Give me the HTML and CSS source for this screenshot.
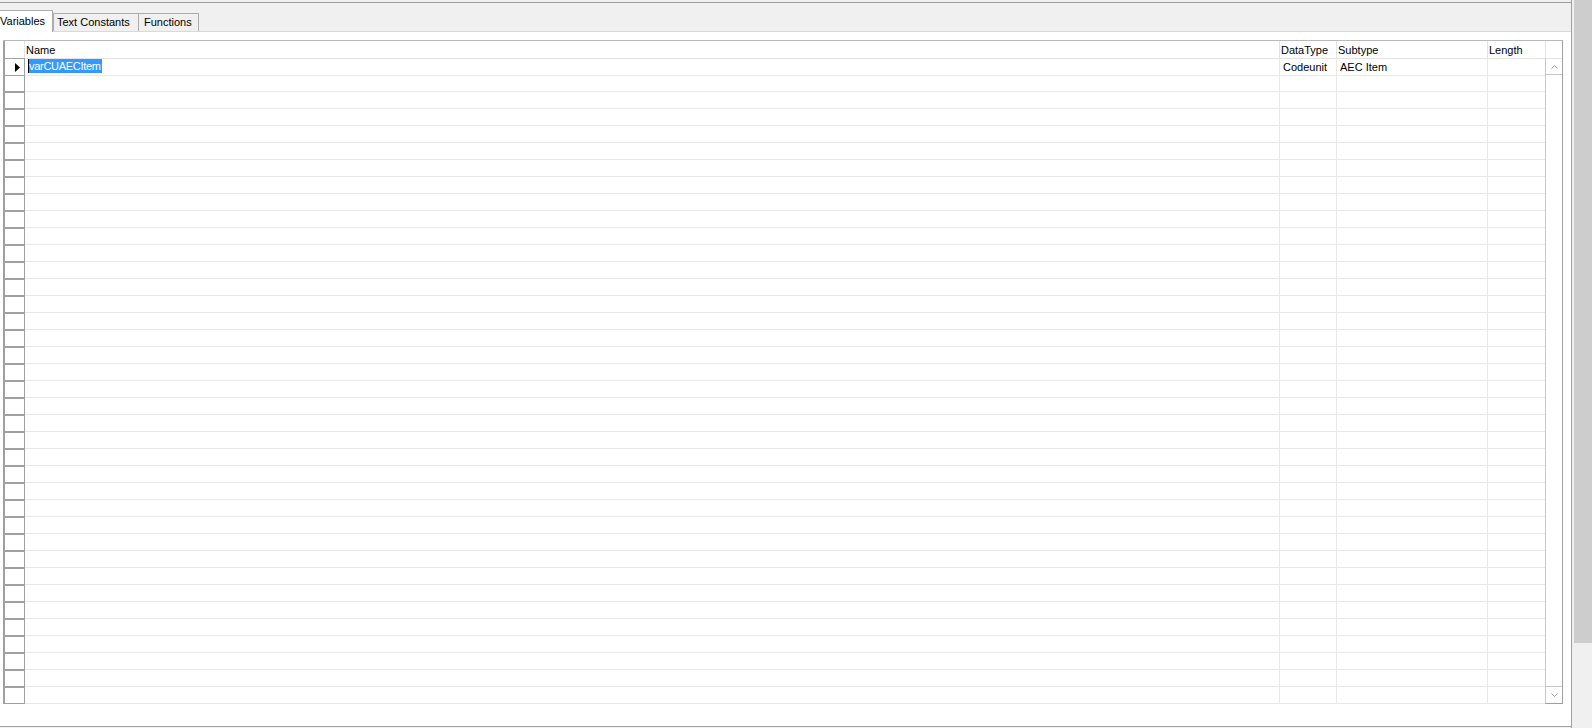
FILE: index.html
```html
<!DOCTYPE html>
<html lang="en">
  <head>
    <meta charset="UTF-8" />
    <title>C/AL Globals</title>
    <link rel="stylesheet" href="styles.css">
  </head>
  <body>
    <div class="window">
      <div class="editor">
        <div class="topline"></div>
        <div class="tabs">
          <div class="tab tab_active tab_vars">Variables</div>
          <div class="tab tab_text">Text Constants</div>
          <div class="tab tab_funcs">Functions</div>
        </div>
        <div class="panel">
          <div class="grid">
            <div class="head">
              <div class="ind"></div>
              <div>Name</div>
              <div>DataType</div>
              <div>Subtype</div>
              <div>Length</div>
              <div class="corner"></div>
            </div>
            <div class="body">
              <div class="rows">
                <div class="row">
                  <div class="ind ind_current">
                    <svg width="5" height="9" viewBox="0 0 5 9"><path d="M0 0 L5 4.5 L0 9 Z" fill="#000" /></svg>
                  </div>
                  <div class="name"><span class="selected">varCUAECItem</span></div>
                  <div class="dtype">Codeunit</div>
                  <div class="stype">AEC Item</div>
                  <div class="len"></div>
                </div>
                <div class="row"><div class="ind"></div><div></div><div></div><div></div><div class="len"></div></div>
                <div class="row"><div class="ind"></div><div></div><div></div><div></div><div class="len"></div></div>
                <div class="row"><div class="ind"></div><div></div><div></div><div></div><div class="len"></div></div>
                <div class="row"><div class="ind"></div><div></div><div></div><div></div><div class="len"></div></div>
                <div class="row"><div class="ind"></div><div></div><div></div><div></div><div class="len"></div></div>
                <div class="row"><div class="ind"></div><div></div><div></div><div></div><div class="len"></div></div>
                <div class="row"><div class="ind"></div><div></div><div></div><div></div><div class="len"></div></div>
                <div class="row"><div class="ind"></div><div></div><div></div><div></div><div class="len"></div></div>
                <div class="row"><div class="ind"></div><div></div><div></div><div></div><div class="len"></div></div>
                <div class="row"><div class="ind"></div><div></div><div></div><div></div><div class="len"></div></div>
                <div class="row"><div class="ind"></div><div></div><div></div><div></div><div class="len"></div></div>
                <div class="row"><div class="ind"></div><div></div><div></div><div></div><div class="len"></div></div>
                <div class="row"><div class="ind"></div><div></div><div></div><div></div><div class="len"></div></div>
                <div class="row"><div class="ind"></div><div></div><div></div><div></div><div class="len"></div></div>
                <div class="row"><div class="ind"></div><div></div><div></div><div></div><div class="len"></div></div>
                <div class="row"><div class="ind"></div><div></div><div></div><div></div><div class="len"></div></div>
                <div class="row"><div class="ind"></div><div></div><div></div><div></div><div class="len"></div></div>
                <div class="row"><div class="ind"></div><div></div><div></div><div></div><div class="len"></div></div>
                <div class="row"><div class="ind"></div><div></div><div></div><div></div><div class="len"></div></div>
                <div class="row"><div class="ind"></div><div></div><div></div><div></div><div class="len"></div></div>
                <div class="row"><div class="ind"></div><div></div><div></div><div></div><div class="len"></div></div>
                <div class="row"><div class="ind"></div><div></div><div></div><div></div><div class="len"></div></div>
                <div class="row"><div class="ind"></div><div></div><div></div><div></div><div class="len"></div></div>
                <div class="row"><div class="ind"></div><div></div><div></div><div></div><div class="len"></div></div>
                <div class="row"><div class="ind"></div><div></div><div></div><div></div><div class="len"></div></div>
                <div class="row"><div class="ind"></div><div></div><div></div><div></div><div class="len"></div></div>
                <div class="row"><div class="ind"></div><div></div><div></div><div></div><div class="len"></div></div>
                <div class="row"><div class="ind"></div><div></div><div></div><div></div><div class="len"></div></div>
                <div class="row"><div class="ind"></div><div></div><div></div><div></div><div class="len"></div></div>
                <div class="row"><div class="ind"></div><div></div><div></div><div></div><div class="len"></div></div>
                <div class="row"><div class="ind"></div><div></div><div></div><div></div><div class="len"></div></div>
                <div class="row"><div class="ind"></div><div></div><div></div><div></div><div class="len"></div></div>
                <div class="row"><div class="ind"></div><div></div><div></div><div></div><div class="len"></div></div>
                <div class="row"><div class="ind"></div><div></div><div></div><div></div><div class="len"></div></div>
                <div class="row"><div class="ind"></div><div></div><div></div><div></div><div class="len"></div></div>
                <div class="row"><div class="ind"></div><div></div><div></div><div></div><div class="len"></div></div>
                <div class="row"><div class="ind"></div><div></div><div></div><div></div><div class="len"></div></div>
              </div>
              <div class="vscroll">
                <div class="sbtn sbtn_up">
                  <svg width="7" height="5" viewBox="0 0 7 5"><polyline points="0.5,4.5 3.5,1.5 6.5,4.5" fill="none" stroke="#9a9a9a" /></svg>
                </div>
                <div class="sbtn sbtn_down">
                  <svg width="7" height="5" viewBox="0 0 7 5"><polyline points="0.5,0.5 3.5,3.5 6.5,0.5" fill="none" stroke="#9a9a9a" /></svg>
                </div>
              </div>
            </div>
          </div>
        </div>
      </div>
      <div class="outer_scroll">
        <div class="thumb"></div>
      </div>
    </div>
  </body>
</html>
```

FILE: styles.css
```css
body {
  margin: 0;
  background: #f0f0f0;
  font-family: "Liberation Sans", Arial, sans-serif;
  font-size: 11px;
  color: #000000;
  overflow: hidden;
}
.window {
  display: flex;
  height: 728px;
}
.editor {
  width: 1572px;
  box-sizing: border-box;
  border-right: 1px solid #a0a0a0;
  display: flex;
  flex-direction: column;
  overflow: hidden;
}
.topline {
  height: 2px;
  border-bottom: 1px solid #a0a0a0;
}
.tabs {
  height: 28px;
  display: flex;
  align-items: flex-end;
  margin-left: -4px;
}
.tab {
  box-sizing: border-box;
  height: 18px;
  border: 1px solid #acacac;
  border-bottom: none;
  line-height: 17px;
  white-space: nowrap;
}
.tab_active {
  height: 22px;
  line-height: 21px;
  background: #ffffff;
  margin-bottom: -1px;
  position: relative;
}
.tab_vars {
  width: 57px;
  padding-left: 3px;
}
.tab_text {
  width: 86px;
  padding-left: 3px;
}
.tab_funcs {
  width: 60px;
  padding-left: 5px;
  border-left: none;
}
.panel {
  flex: 1;
  background: #ffffff;
  border-top: 1px solid #d9d9d9;
  border-bottom: 1px solid #a0a0a0;
  margin-bottom: 1px;
}
.grid {
  margin: 8px 0 0 3px;
  width: 1560px;
  box-sizing: border-box;
  border-top: 1px solid #b9b9b9;
  border-right: 1px solid #a0a0a0;
}
.head {
  display: grid;
  grid-template-columns: 22px 1255px 57px 151px 58px 16px;
  height: 17px;
}
.head > div {
  box-sizing: border-box;
  border-right: 1px solid #e3e3e3;
  border-bottom: 1px solid #e3e3e3;
  line-height: 16px;
  padding-top: 1px;
  padding-left: 1px;
  white-space: nowrap;
}
.head .ind {
  border-left: 2px solid #a0a0a0;
  border-bottom-color: #a0a0a0;
}
.head .corner {
  border-right: none;
}
.body {
  display: flex;
}
.rows {
  width: 1542px;
}
.row {
  display: grid;
  grid-template-columns: 22px 1255px 57px 151px 57px;
  height: 17px;
}
.row > div {
  box-sizing: border-box;
  border-right: 1px solid #e8e8e8;
  border-bottom: 1px solid #e8e8e8;
  line-height: 16px;
  padding-top: 1px;
  white-space: nowrap;
}
.row .len {
  border-right: none;
}
.row .ind {
  border: 1px solid #a0a0a0;
  border-left-width: 2px;
  padding-top: 0;
}
.ind_current {
  display: flex;
  align-items: center;
  padding-left: 10px;
}
.name {
  padding-left: 3px;
}
.row .name {
  padding-top: 1px;
}
.selected {
  display: inline-block;
  height: 14px;
  line-height: 15px;
  vertical-align: top;
  padding-right: 1px;
  letter-spacing: -0.3px;
  background: #3399ff;
  color: #ffffff;
  border-left: 1px solid #000000;
}
.dtype {
  padding-left: 3px;
}
.stype {
  padding-left: 3px;
}
.vscroll {
  width: 17px;
  box-sizing: border-box;
  border-left: 1px solid #c8c8c8;
  border-bottom: 1px solid #a0a0a0;
  display: flex;
  flex-direction: column;
  justify-content: space-between;
}
.sbtn {
  height: 17px;
  box-sizing: border-box;
  display: flex;
  align-items: center;
  justify-content: center;
}
.sbtn_up {
  border-bottom: 1px solid #c8c8c8;
}
.sbtn_down {
  border-top: 1px solid #c8c8c8;
}
.outer_scroll {
  margin-left: 2px;
  width: 18px;
}
.thumb {
  height: 643px;
  background: #cdcdcd;
}
```
